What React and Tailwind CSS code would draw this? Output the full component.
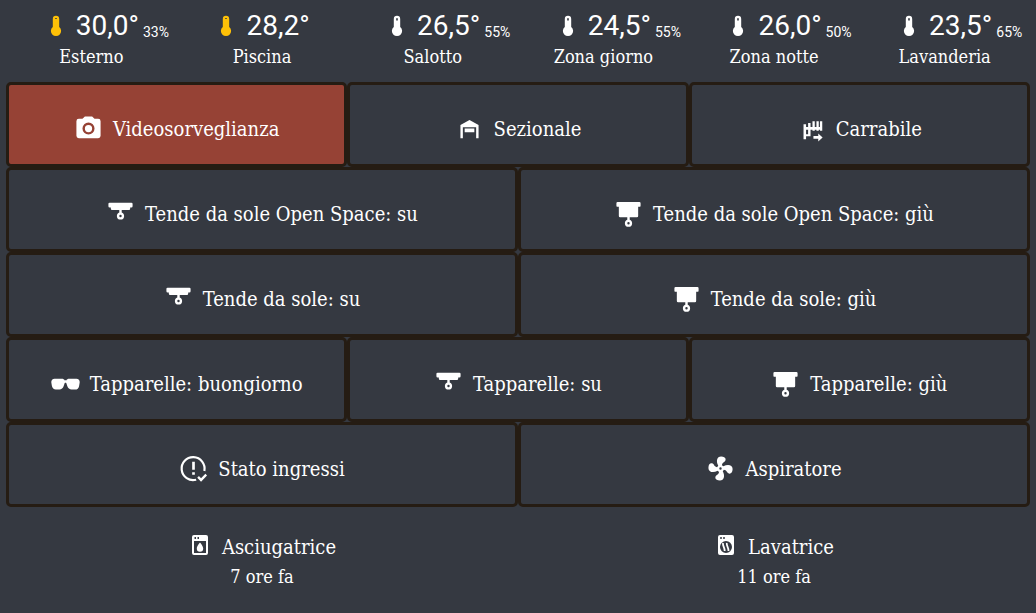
const ICONS = {
  thermometer:
    'M15.200 13V5A3.200 3.200 0 0 0 8.800 5V13A5.100 5.100 0 1 0 15.200 13M12 4A.8 .8 0 0 1 12.8 4.8V6.500H11.2V4.800A.8 .8 0 0 1 12 4Z',
  thermometerHigh:
    'M15.200 13V5A3.200 3.200 0 0 0 8.800 5V13A5.100 5.100 0 1 0 15.200 13M12 4A1 1 0 0 1 13 5H11A1 1 0 0 1 12 4Z',
  camera:
    'M4,4H7L9,2H15L17,4H20A2,2 0 0,1 22,6V18A2,2 0 0,1 20,20H4A2,2 0 0,1 2,18V6A2,2 0 0,1 4,4M12,7A5,5 0 0,0 7,12A5,5 0 0,0 12,17A5,5 0 0,0 17,12A5,5 0 0,0 12,7M12,9A3,3 0 0,1 15,12A3,3 0 0,1 12,15A3,3 0 0,1 9,12A3,3 0 0,1 12,9Z',
  garage: 'M19.5,20H17.5V11H6.5V20H4.5V9L12,5L19.5,9V20M8,12H16V15H8V12Z',
  gate:
    'M5.400 8.500H7.500V20.800H5.400ZM9.200 7.500H11.200V18.500H9.200ZM12.800 5.900H14.700V13.900H12.800ZM16.100 5.900H18V13.900H16.100ZM19 5.900H20.900V13.900H19ZM5.400 10.700H20.900V13H5.400ZM5.400 16.800H11.200V18.500H5.400ZM13.600 18.300H17.600V16.100L21.200 19.400L17.600 22.700V20.500H13.600Z',
  blindsUp:
    'M3 3H21A1 1 0 0 1 22 4V6A1 1 0 0 1 21 7H20V8A1 1 0 0 1 19 9H13V11.17C14.17 11.58 15 12.69 15 14A3 3 0 0 1 9 14C9 12.69 9.83 11.58 11 11.17V9H5A1 1 0 0 1 4 8V7H3A1 1 0 0 1 2 6V4A1 1 0 0 1 3 3M12 13A1 1 0 0 0 12 15A1 1 0 0 0 12 13Z',
  blindsDown:
    'M3,2.500H21A1,1 0 0,1 22,3.500V5.500A1,1 0 0,1 21,6.500H20V14A1,1 0 0,1 19,15H13V17.17C14.17,17.58 15,18.69 15,20A3,3 0 0,1 12,23A3,3 0 0,1 9,20C9,18.69 9.83,17.58 11,17.17V15H5A1,1 0 0,1 4,14V6.500H3A1,1 0 0,1 2,5.500V3.500A1,1 0 0,1 3,2.500M12,19A1,1 0 0,0 11,20A1,1 0 0,0 12,21A1,1 0 0,0 13,20A1,1 0 0,0 12,19Z',
  sunglasses:
    'M7,17H4C2.38,17 0.96,15.74 0.76,14.14L0.26,11.15C0.15,10.3 0.39,9.5 0.91,8.92C1.43,8.34 2.19,8 3,8H9C9.83,8 10.58,8.35 11.06,8.96C11.17,9.11 11.27,9.27 11.35,9.45C11.78,9.36 12.22,9.36 12.64,9.45C12.72,9.27 12.82,9.11 12.94,8.96C13.41,8.35 14.16,8 15,8H21C21.81,8 22.57,8.34 23.09,8.92C23.6,9.5 23.84,10.3 23.74,11.11L23.23,14.18C23.04,15.74 21.61,17 20,17H17C15.44,17 13.92,15.81 13.54,14.3L12.64,11.59C12.26,11.31 11.73,11.31 11.35,11.59L10.43,14.37C10.07,15.82 8.56,17 7,17Z',
  fan:
    'M12,11A1,1 0 0,0 11,12A1,1 0 0,0 12,13A1,1 0 0,0 13,12A1,1 0 0,0 12,11M12.5,2C17,2 17.11,5.57 14.75,6.75C13.76,7.24 13.32,8.29 13.13,9.22C13.61,9.42 14.03,9.73 14.35,10.13C18.05,8.13 22.03,8.92 22.03,12.5C22.03,17 18.46,17.1 17.28,14.73C16.78,13.74 15.72,13.3 14.79,13.11C14.59,13.59 14.28,14 13.88,14.34C15.87,18.03 15.08,22 11.5,22C7,22 6.91,18.42 9.27,17.24C10.25,16.75 10.69,15.71 10.89,14.79C10.4,14.59 9.97,14.27 9.65,13.87C5.96,15.85 2,15.07 2,11.5C2,7 5.56,6.89 6.74,9.26C7.24,10.25 8.29,10.68 9.22,10.87C9.41,10.39 9.73,9.97 10.14,9.65C8.15,5.96 8.94,2 12.5,2Z',
  alertCheck:
    'M10.900 6.500V13H13.100V6.500ZM10.900 15V17.200H13.100V15ZM18.250 22.900L15.100 19.600L16.500 18.200L18.250 20L21.840 16.400L23.200 17.810Z',
  dryer:
    'M6 2H18A2 2 0 0 1 20 4V20A2 2 0 0 1 18 22H6A2 2 0 0 1 4 20V4A2 2 0 0 1 6 2M6.500 4V6H8V4ZM9.500 4V6H11V4ZM6 8V20H18V8ZM12 9.500C12 9.500 15.200 13 15.200 15.500A3.200 3.200 0 0 1 8.800 15.500C8.800 13 12 9.500 12 9.500Z',
  washer:
    'M6 2H18A2 2 0 0 1 20 4V20A2 2 0 0 1 18 22H6A2 2 0 0 1 4 20V4A2 2 0 0 1 6 2M7 4A1 1 0 0 0 7 6A1 1 0 0 0 7 4M10 4A1 1 0 0 0 10 6A1 1 0 0 0 10 4M12 8A6 6 0 0 0 12 20A6 6 0 0 0 12 8Z',
};

const STROKES = {
  washer: 'M9 10C8.500 13 10.800 14.500 10.700 18M12.800 10C12.300 13 14.800 14.500 14.500 18',
  alertCheck: 'M21 14A9.500 9.500 0 1 0 14.200 21.300',
};

const SENSORS = [
  { name: 'Esterno', value: '30,0°', humidity: '33%', hot: true },
  { name: 'Piscina', value: '28,2°', hot: true },
  { name: 'Salotto', value: '26,5°', humidity: '55%' },
  { name: 'Zona giorno', value: '24,5°', humidity: '55%' },
  { name: 'Zona notte', value: '26,0°', humidity: '50%' },
  { name: 'Lavanderia', value: '23,5°', humidity: '65%' },
];

const ROWS = [
  [
    { icon: 'camera', label: 'Videosorveglianza', active: true },
    { icon: 'garage', label: 'Sezionale' },
    { icon: 'gate', label: 'Carrabile' },
  ],
  [
    { icon: 'blindsUp', label: 'Tende da sole Open Space: su' },
    { icon: 'blindsDown', label: 'Tende da sole Open Space: giù' },
  ],
  [
    { icon: 'blindsUp', label: 'Tende da sole: su' },
    { icon: 'blindsDown', label: 'Tende da sole: giù' },
  ],
  [
    { icon: 'sunglasses', label: 'Tapparelle: buongiorno' },
    { icon: 'blindsUp', label: 'Tapparelle: su' },
    { icon: 'blindsDown', label: 'Tapparelle: giù' },
  ],
  [
    { icon: 'alertCheck', label: 'Stato ingressi' },
    { icon: 'fan', label: 'Aspiratore' },
  ],
];

const APPLIANCES = [
  { icon: 'dryer', name: 'Asciugatrice', since: '7 ore fa' },
  { icon: 'washer', name: 'Lavatrice', since: '11 ore fa' },
];

function Icon({ name, className }) {
  return (
    <svg
      viewBox="0 0 24 24"
      fill="currentColor"
      fillRule={name === 'gate' ? 'nonzero' : 'evenodd'}
      aria-hidden="true"
      className={`shrink-0 ${className}`}
    >
      <path d={ICONS[name]} />
      {STROKES[name] && <path d={STROKES[name]} fill="none" stroke="currentColor" strokeWidth="1.800" />}
    </svg>
  );
}

function Sensor({ name, value, humidity, hot }) {
  return (
    <div className="flex min-w-0 flex-1 flex-col items-center">
      <div className="relative flex items-center gap-2">
        <Icon
          name={hot ? 'thermometerHigh' : 'thermometer'}
          className={hot ? 'size-6 text-[#ffc107]' : 'size-6'}
        />
        <span className="font-['Roboto_Slab',Roboto,sans-serif] text-[28px] leading-9">{value}</span>
        {humidity && (
          <span className="absolute bottom-0 left-full ml-1 font-['Roboto_Slab',Roboto,sans-serif] text-sm leading-6">
            {humidity}
          </span>
        )}
      </div>
      <span className="text-lg leading-[26px]">{name}</span>
    </div>
  );
}

function ActionButton({ icon, label, active }) {
  return (
    <button
      type="button"
      className={`flex h-[85px] min-w-0 flex-1 items-center justify-center gap-2.5 rounded-[5px] border-3 border-[#251c13] pt-2 text-xl leading-7 ${
        active ? 'bg-[#964235]' : 'bg-[#353941]'
      }`}
    >
      <Icon name={icon} className="size-[29px]" />
      <span>{label}</span>
    </button>
  );
}

function Appliance({ icon, name, since }) {
  return (
    <div className="flex flex-1 flex-col items-center">
      <div className="flex items-center gap-2.5 text-xl leading-8">
        <Icon name={icon} className="mb-1 size-6" />
        <span>{name}</span>
      </div>
      <span className="text-lg leading-7">{since}</span>
    </div>
  );
}

export default function App() {
  return (
    <main className="min-h-screen bg-[#353941] px-1.5 font-['Roboto_Slab','DejaVu_Serif_Condensed','DejaVu_Serif',serif] text-white">
      <header className="flex pt-2 pb-3">
        {SENSORS.map((s) => (
          <Sensor key={s.name} {...s} />
        ))}
      </header>
      {ROWS.map((row) => (
        <div key={row[0].label} className="flex">
          {row.map((b) => (
            <ActionButton key={b.label} {...b} />
          ))}
        </div>
      ))}
      <footer className="flex pt-6 pb-4">
        {APPLIANCES.map((a) => (
          <Appliance key={a.name} {...a} />
        ))}
      </footer>
    </main>
  );
}
